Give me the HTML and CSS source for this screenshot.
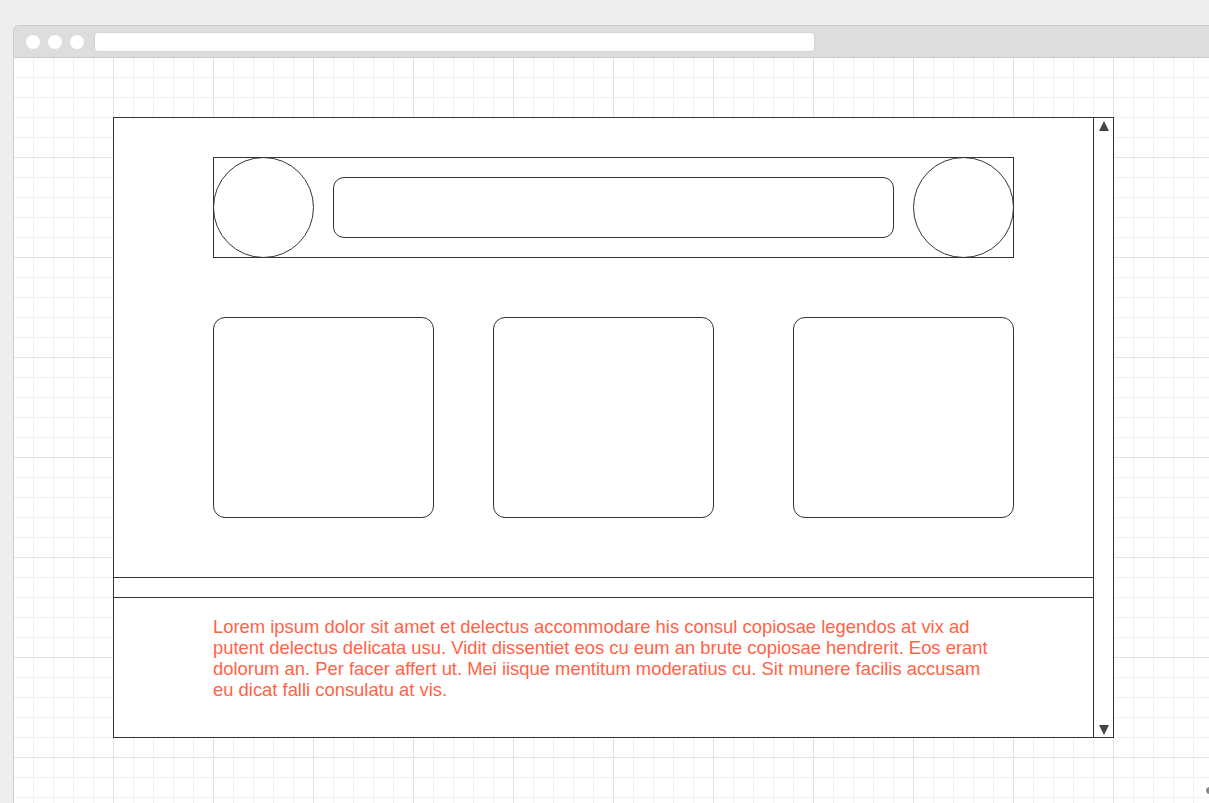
FILE: index.html
```html
<!DOCTYPE html>
<html lang="en">

<head>
    <meta charset="UTF-8">
    <meta name="viewport" content="width=device-width, initial-scale=1.0">
    <title>Wireframe</title>
    <link rel="stylesheet" href="styles.css">
</head>

<body>

    <div class="window">
        <div class="titlebar">
            <span class="dot"></span>
            <span class="dot"></span>
            <span class="dot"></span>
            <div class="address"></div>
        </div>

        <div class="canvas">
            <div class="frame">
                <div class="main">
                    <div class="top">
                        <div class="header">
                            <div class="circle"></div>
                            <div class="search"></div>
                            <div class="circle"></div>
                        </div>

                        <div class="cards">
                            <div class="card"></div>
                            <div class="card card-mid"></div>
                            <div class="card card-last"></div>
                        </div>
                    </div>

                    <div class="band"></div>

                    <div class="footer">
                        <p class="copy">Lorem ipsum dolor sit amet et delectus accommodare his consul copiosae legendos at vix ad putent delectus delicata usu. Vidit dissentiet eos cu eum an brute copiosae hendrerit. Eos erant dolorum an. Per facer affert ut. Mei iisque mentitum moderatius cu. Sit munere facilis accusam eu dicat falli consulatu at vis.</p>
                    </div>
                </div>

                <div class="scrollbar">
                    <svg class="arrow" width="10" height="10" viewBox="0 0 10 10"><path d="M5 0 L10 10 L0 10 Z"></path></svg>
                    <svg class="arrow" width="10" height="10" viewBox="0 0 10 10"><path d="M0 0 L10 0 L5 10 Z"></path></svg>
                </div>
            </div>
        </div>
    </div>

    <span class="handle"></span>

</body>

</html>
```

FILE: styles.css
```css
body {
    margin: 0;
    overflow: hidden;
    background-color: #eeeeee;
    font-family: 'Liberation Sans', Arial, sans-serif;
    height: 100vh;
}

.window {
    margin: 25px 0 0 13px;
    width: 1300px;
    border: 1px solid #cccccc;
    border-right: none;
    border-radius: 6px 0 0 0;
    overflow: hidden;
}

.titlebar {
    display: flex;
    align-items: center;
    gap: 8px;
    height: 31px;
    padding-left: 12px;
    background-color: #dddddd;
    border-bottom: 1px solid #cccccc;
}

.dot {
    width: 14px;
    height: 14px;
    border-radius: 50%;
    background-color: #ffffff;
}

.address {
    width: 721px;
    height: 20px;
    margin-left: 2px;
    box-sizing: border-box;
    background-color: #ffffff;
    border: 1px solid #d4d4d4;
    border-radius: 4px;
}

.canvas {
    height: 760px;
    padding: 59px 0 0 99px;
    background-color: #ffffff;
    /* 20px minor grid, 100px major grid */
    background-image:
        linear-gradient(to right, transparent 99px, #e2e2e2 99px, #e2e2e2 100px),
        linear-gradient(to bottom, transparent 99px, #e2e2e2 99px, #e2e2e2 100px),
        linear-gradient(to right, transparent 19px, #efefef 19px, #efefef 20px),
        linear-gradient(to bottom, transparent 19px, #efefef 19px, #efefef 20px);
    background-size: 100px 100px, 100px 100px, 20px 20px, 20px 20px;
}

.frame {
    display: flex;
    width: 1001px;
    height: 621px;
    box-sizing: border-box;
    border: 1px solid #333333;
    background-color: #ffffff;
}

.main {
    flex: 1;
    display: flex;
    flex-direction: column;
}

.top {
    height: 459px;
    box-sizing: border-box;
    padding: 39px 0 0 99px;
}

.header {
    display: flex;
    align-items: flex-start;
    width: 801px;
    height: 101px;
    box-sizing: border-box;
    border: 1px solid #333333;
}

.circle {
    flex: none;
    width: 101px;
    height: 101px;
    margin: -1px;
    box-sizing: border-box;
    border: 1px solid #333333;
    border-radius: 50%;
}

.search {
    flex: none;
    width: 561px;
    height: 61px;
    margin: 19px 20px 0 20px;
    box-sizing: border-box;
    border: 1px solid #333333;
    border-radius: 11px;
}

.cards {
    display: flex;
    margin-top: 59px;
}

.card {
    width: 221px;
    height: 201px;
    box-sizing: border-box;
    border: 1px solid #333333;
    border-radius: 12px;
}

.card-mid {
    margin-left: 59px;
}

.card-last {
    margin-left: 79px;
}

.band {
    height: 21px;
    box-sizing: border-box;
    border-top: 1px solid #333333;
    border-bottom: 1px solid #333333;
}

.footer {
    flex: 1;
    padding: 18px 0 0 99px;
}

.copy {
    margin: 0;
    width: 780px;
    font-size: 18.4px;
    line-height: 21px;
    color: #ff6347;
}

.scrollbar {
    display: flex;
    flex-direction: column;
    justify-content: space-between;
    width: 20px;
    box-sizing: border-box;
    padding: 3px 0 2px 5px;
    border-left: 1px solid #333333;
}

.arrow {
    display: block;
    fill: #444444;
}

.handle {
    position: absolute;
    left: 1206px;
    top: 787px;
    width: 8px;
    height: 7px;
    border-radius: 50%;
    background-color: #888888;
}
```
